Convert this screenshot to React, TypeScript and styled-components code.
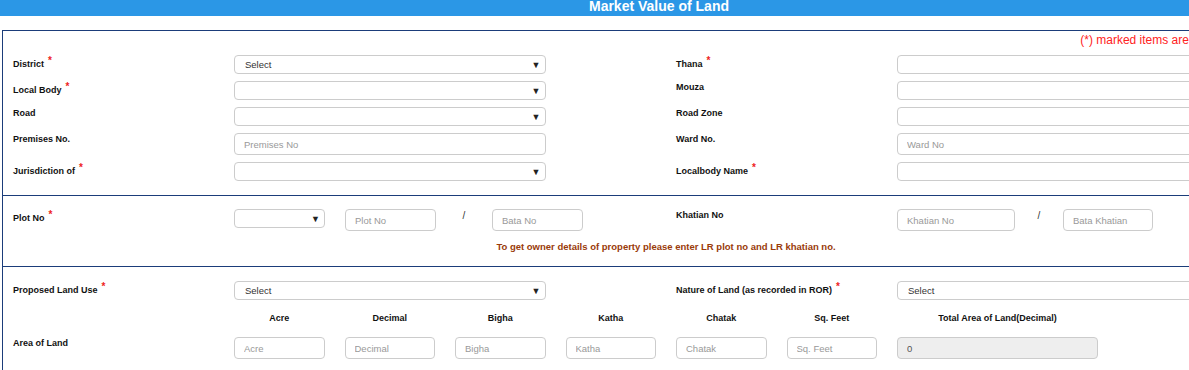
import React from "react";
import styled, { createGlobalStyle } from "styled-components";

const GlobalStyle = createGlobalStyle`
  html, body {
    margin: 0;
    padding: 0;
    background: #fff;
    overflow: hidden;
  }
  body {
    font-family: "Liberation Sans", Arial, sans-serif;
  }
`;

const NAVY = "#1b3d7a";

const Page = styled.div`
  width: 1318px;
`;

const TitleBar = styled.div`
  height: 16px;
  background: #2b97e6;
  color: #fff;
  text-align: center;
  font-size: 14px;
  font-weight: bold;
  line-height: 12px;
  overflow: hidden;
`;

const FormBox = styled.div`
  margin: 14px 0 0 2px;
  width: 1326px;
  border: 1px solid ${NAVY};
`;

const Section = styled.div<{ $pt: number; $pb: number; $divider?: boolean }>`
  padding: ${(p) => p.$pt}px 0 ${(p) => p.$pb}px;
  border-top: ${(p) => (p.$divider ? `1px solid ${NAVY}` : "none")};
`;

const MandatoryNote = styled.div`
  text-align: right;
  padding-right: 80px;
  color: #f22;
  font-size: 12px;
  line-height: 14px;
  margin-bottom: 8px;
`;

const Stack = styled.div`
  display: flex;
  flex-direction: column;
  gap: 7px;
`;

const Row = styled.div<{ $mt?: number }>`
  display: grid;
  grid-template-columns: repeat(12, 110.5px);
  align-items: start;
  margin-top: ${(p) => p.$mt ?? 0}px;
`;

const Col = styled.div<{ $start: number; $span?: number; $center?: boolean }>`
  grid-column: ${(p) => p.$start} / span ${(p) => p.$span ?? 1};
  padding: 0 10px;
  text-align: ${(p) => (p.$center ? "center" : "left")};
`;

const Group = styled.div`
  display: flex;
  align-items: flex-start;
`;

const Label = styled.label<{ $req?: boolean }>`
  display: block;
  padding-top: ${(p) => (p.$req ? 4 : 1)}px;
  font-size: 9px;
  font-weight: bold;
  line-height: 10px;
  color: #111;
  white-space: nowrap;
`;

const Req = styled.span`
  position: relative;
  top: -3px;
  margin-left: 4px;
  color: #e22;
  font-size: 10px;
  line-height: 10px;
`;

const UnitHead = styled.div`
  font-size: 9px;
  font-weight: bold;
  line-height: 12px;
  color: #111;
  white-space: nowrap;
`;

const SelectBox = styled.div<{ $w?: number; $mr?: number }>`
  box-sizing: border-box;
  width: ${(p) => (p.$w ? `${p.$w}px` : "100%")};
  flex: none;
  height: 19px;
  margin-right: ${(p) => p.$mr ?? 0}px;
  border: 1px solid #ccc;
  border-radius: 4px;
  padding: 0 4px 0 10px;
  display: flex;
  align-items: center;
  justify-content: space-between;
  font-size: 9.5px;
  color: #333;
  background: #fff;
`;

const Caret = styled.span`
  font-size: 9px;
  color: #222;
`;

const TextInput = styled.input<{ $w?: number; $muted?: boolean }>`
  box-sizing: border-box;
  display: block;
  flex: none;
  width: ${(p) => (p.$w ? `${p.$w}px` : "100%")};
  height: 22px;
  margin: 0;
  border: 1px solid #ccc;
  border-radius: 4px;
  padding: 0 9px;
  font: 9.5px "Liberation Sans", Arial, sans-serif;
  color: #555;
  background: ${(p) => (p.$muted ? "#eee" : "#fff")};
  outline: none;
  &::placeholder {
    color: #999;
  }
`;

const Slash = styled.span<{ $w: number }>`
  width: ${(p) => p.$w}px;
  flex: none;
  text-align: center;
  font-size: 10px;
  line-height: 14px;
  color: #333;
`;

const OwnerNote = styled.div`
  margin-top: 11px;
  text-align: center;
  font-size: 9.5px;
  font-weight: bold;
  line-height: 10px;
  color: #9a3b0a;
`;

const Select = ({ value, w, mr }: { value?: string; w?: number; mr?: number }) => (
  <SelectBox $w={w} $mr={mr}>
    <span>{value}</span>
    <Caret>▼</Caret>
  </SelectBox>
);

const FieldLabel = ({ text, req }: { text: string; req?: boolean }) => (
  <Label $req={req}>
    {text}
    {req && <Req>*</Req>}
  </Label>
);

type Field = { label: string; req?: boolean; kind: "select" | "input"; value?: string; ph?: string };

const topRows: [Field, Field][] = [
  [
    { label: "District", req: true, kind: "select", value: "Select" },
    { label: "Thana", req: true, kind: "select" },
  ],
  [
    { label: "Local Body", req: true, kind: "select" },
    { label: "Mouza", kind: "select" },
  ],
  [
    { label: "Road", kind: "select" },
    { label: "Road Zone", kind: "select" },
  ],
  [
    { label: "Premises No.", kind: "input", ph: "Premises No" },
    { label: "Ward No.", kind: "input", ph: "Ward No" },
  ],
  [
    { label: "Jurisdiction of", req: true, kind: "select" },
    { label: "Localbody Name", req: true, kind: "select" },
  ],
];

const units = ["Acre", "Decimal", "Bigha", "Katha", "Chatak", "Sq. Feet"];

const Control = ({ f }: { f: Field }) =>
  f.kind === "select" ? <Select value={f.value} /> : <TextInput placeholder={f.ph} />;

export default function App() {
  return (
    <Page>
      <GlobalStyle />
      <TitleBar>Market Value of Land</TitleBar>
      <FormBox>
        <Section $pt={2} $pb={14}>
          <MandatoryNote>(*) marked items are mandatory</MandatoryNote>
          <Stack>
            {topRows.map(([left, right]) => (
              <Row key={left.label}>
                <Col $start={1} $span={2}>
                  <FieldLabel text={left.label} req={left.req} />
                </Col>
                <Col $start={3} $span={3}>
                  <Control f={left} />
                </Col>
                <Col $start={7} $span={2}>
                  <FieldLabel text={right.label} req={right.req} />
                </Col>
                <Col $start={9} $span={3}>
                  <Control f={right} />
                </Col>
              </Row>
            ))}
          </Stack>
        </Section>

        <Section $divider $pt={13} $pb={14}>
          <Row>
            <Col $start={1} $span={2}>
              <FieldLabel text="Plot No" req />
            </Col>
            <Col $start={3} $span={4}>
              <Group>
                <Select w={91} mr={20} />
                <TextInput $w={91} placeholder="Plot No" />
                <Slash $w={56}>/</Slash>
                <TextInput $w={91} placeholder="Bata No" />
              </Group>
            </Col>
            <Col $start={7} $span={2}>
              <FieldLabel text="Khatian No" />
            </Col>
            <Col $start={9} $span={4}>
              <Group>
                <TextInput $w={118} placeholder="Khatian No" />
                <Slash $w={48}>/</Slash>
                <TextInput $w={90} placeholder="Bata Khatian" />
              </Group>
            </Col>
          </Row>
          <OwnerNote>
            To get owner details of property please enter LR plot no and LR khatian no.
          </OwnerNote>
        </Section>

        <Section $divider $pt={14} $pb={14}>
          <Row>
            <Col $start={1} $span={2}>
              <FieldLabel text="Proposed Land Use" req />
            </Col>
            <Col $start={3} $span={3}>
              <Select value="Select" />
            </Col>
            <Col $start={7} $span={2}>
              <FieldLabel text="Nature of Land (as recorded in ROR)" req />
            </Col>
            <Col $start={9} $span={3}>
              <Select value="Select" />
            </Col>
          </Row>
          <Row $mt={12}>
            {units.map((u, i) => (
              <Col key={u} $start={3 + i} $center>
                <UnitHead>{u}</UnitHead>
              </Col>
            ))}
            <Col $start={9} $span={2} $center>
              <UnitHead>Total Area of Land(Decimal)</UnitHead>
            </Col>
          </Row>
          <Row $mt={13}>
            <Col $start={1} $span={2}>
              <FieldLabel text="Area of Land" />
            </Col>
            {units.map((u, i) => (
              <Col key={u} $start={3 + i}>
                <TextInput placeholder={u} />
              </Col>
            ))}
            <Col $start={9} $span={2}>
              <TextInput $muted readOnly value="0" />
            </Col>
          </Row>
        </Section>
      </FormBox>
    </Page>
  );
}
